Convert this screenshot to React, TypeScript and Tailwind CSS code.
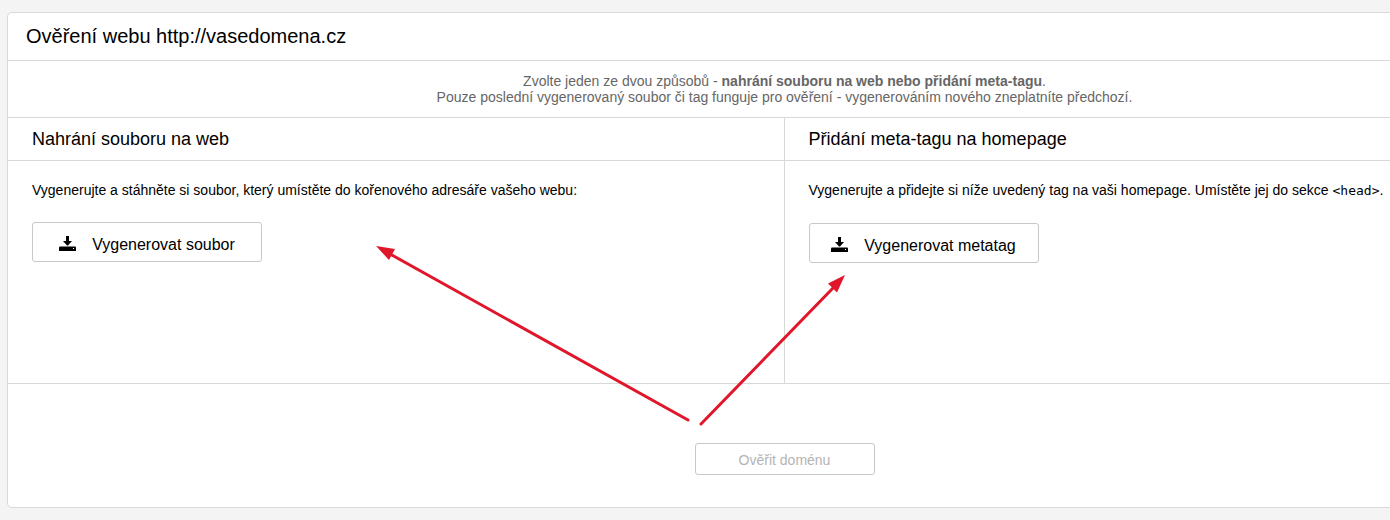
import React, { FC, ReactNode } from "react";

interface MethodProps {
  title: string;
  description: ReactNode;
  action: string;
  className?: string;
}

const DownloadIcon: FC = () => (
  <svg className="mb-1 h-4 w-[17px] shrink-0" viewBox="0 0 17 16" aria-hidden="true">
    <path d="M7 1h3v5h3L9 10.5H8L4 6h3z" fill="#000" />
    <path d="M0 12.5q0-1 1-1h15q1 0 1 1V16H0z" fill="#000" />
    <path d="M14 13h1v1h-1z" fill="#fff" />
  </svg>
);

const Method: FC<MethodProps> = ({ title, description, action, className = "" }) => (
  <section className={className}>
    <h2 className="border-b border-[#d8d8d8] px-6 py-2 text-lg leading-[26px]">{title}</h2>
    <div className="px-6 pt-5 pb-[120px]">
      <p className="mb-[23px] text-sm leading-[18px]">{description}</p>
      <button
        type="button"
        className="flex h-10 w-[230px] items-center justify-center gap-4 rounded-[3px] border border-[#c8c8c8] bg-white pt-1.5 text-base"
      >
        <DownloadIcon />
        {action}
      </button>
    </div>
  </section>
);

const Arrows: FC = () => (
  <svg
    className="pointer-events-none absolute top-[240px] left-[370px]"
    width="480"
    height="190"
    viewBox="370 240 480 190"
    fill="#e0162b"
    stroke="#e0162b"
    aria-hidden="true"
  >
    <path d="M688 420 390 254M701 424 834 287" strokeWidth="3" strokeLinecap="round" />
    <path d="M376 246 395 249 389 260z" stroke="none" />
    <path d="M845 275 828 283.5 837 292.5z" stroke="none" />
  </svg>
);

const App: FC = () => (
  <div className="relative min-h-screen overflow-hidden bg-[#f4f4f4] pt-3 pb-3 font-['Liberation_Sans',Arial,sans-serif] text-black">
    {/* the panel runs past the right edge of the window */}
    <main className="-mr-[172px] ml-[7px] rounded-[5px] border border-[#d8d8d8] bg-white">
      <h1 className="border-b border-[#d8d8d8] px-[18px] py-2 text-xl leading-[31px]">
        Ověření webu http://vasedomena.cz
      </h1>
      <p className="border-b border-[#d8d8d8] py-3 text-center text-sm leading-4 text-[#666]">
        Zvolte jeden ze dvou způsobů - <b>nahrání souboru na web nebo přidání meta-tagu</b>.
        <br />
        Pouze poslední vygenerovaný soubor či tag funguje pro ověření - vygenerováním nového zneplatníte předchozí.
      </p>
      <div className="grid grid-cols-2 border-b border-[#d8d8d8]">
        <Method
          className="border-r border-[#d8d8d8]"
          title="Nahrání souboru na web"
          description="Vygenerujte a stáhněte si soubor, který umístěte do kořenového adresáře vašeho webu:"
          action="Vygenerovat soubor"
        />
        <Method
          title="Přidání meta-tagu na homepage"
          description={
            <>
              Vygenerujte a přidejte si níže uvedený tag na vaši homepage. Umístěte jej do sekce{" "}
              <code className="font-['DejaVu_Sans_Mono',monospace] text-[13px]">&lt;head&gt;</code>.
            </>
          }
          action="Vygenerovat metatag"
        />
      </div>
      <div className="flex justify-center pt-[59px] pb-8">
        <button
          type="button"
          disabled
          className="h-8 w-[180px] rounded-[3px] border border-[#c8c8c8] bg-white pt-0.5 text-sm text-[#b4b4b4]"
        >
          Ověřit doménu
        </button>
      </div>
    </main>
    <Arrows />
  </div>
);

export default App;
